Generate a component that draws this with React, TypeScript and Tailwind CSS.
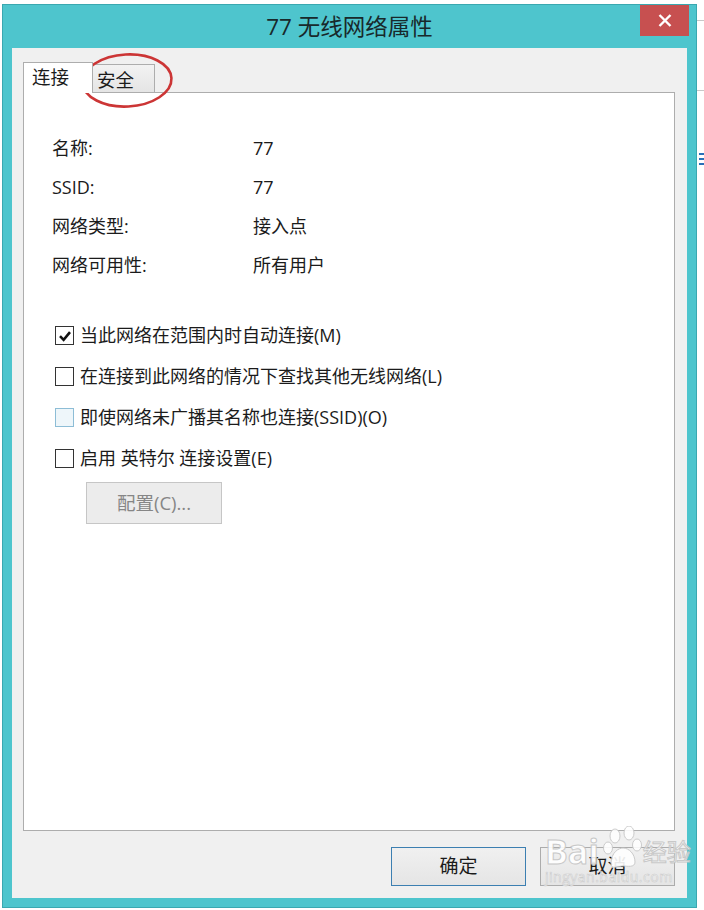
import clsx from "clsx";

const infoRows: [string, string][] = [
  ["名称:", "77"],
  ["SSID:", "77"],
  ["网络类型:", "接入点"],
  ["网络可用性:", "所有用户"],
];

const options = [
  { label: "当此网络在范围内时自动连接(M)", checked: true },
  { label: "在连接到此网络的情况下查找其他无线网络(L)" },
  { label: "即使网络未广播其名称也连接(SSID)(O)", hover: true },
  { label: "启用 英特尔 连接设置(E)" },
];

function CheckBox({ checked, hover }: { checked?: boolean; hover?: boolean }) {
  return (
    <span
      className={clsx(
        "flex h-[19px] w-[19px] shrink-0 items-center justify-center border",
        hover ? "border-[#8dbdd6] bg-[#eef6fa]" : "border-[#333333] bg-white"
      )}
    >
      {checked && (
        <svg width="14" height="14" viewBox="0 0 14 14">
          <path d="M2 7.2 L5.6 10.8 L12 3.2" fill="none" stroke="#111" strokeWidth="2.6" />
        </svg>
      )}
    </span>
  );
}

function Watermark() {
  return (
    <div className="pointer-events-none absolute left-[545px] top-[826px] flex flex-col opacity-90">
      <div className="flex items-end">
        <span className="text-[34px] font-bold leading-none text-white [-webkit-text-stroke:1px_#c4c4c4]">
          Bai
        </span>
        <svg width="58" height="44" viewBox="0 0 58 44" className="-mb-[2px]">
          <g fill="#ffffff" stroke="#c8c8c8" strokeWidth="1">
            <ellipse cx="16" cy="10" rx="5" ry="7" />
            <ellipse cx="30" cy="7" rx="5" ry="7" />
            <ellipse cx="9" cy="22" rx="4.5" ry="6" />
            <ellipse cx="38" cy="19" rx="4.5" ry="6" />
            <path d="M12 38 C12 26 20 22 24 22 C30 22 36 28 36 36 C36 42 28 40 24 40 C20 40 12 44 12 38 Z" />
          </g>
        </svg>
        <span className="-ml-[14px] mb-[4px] text-[24px] leading-none text-white [-webkit-text-stroke:1px_#c4c4c4]">
          经验
        </span>
      </div>
      <span className="mt-[2px] text-[14px] leading-none tracking-[0.5px] text-white [-webkit-text-stroke:0.6px_#c8c8c8]">
        jingyan.baidu.com
      </span>
    </div>
  );
}

export default function App() {
  return (
    <div className="relative flex h-[910px] w-[704px] flex-col overflow-hidden bg-white font-['Open_Sans','Noto_Sans_CJK_SC',sans-serif] text-[#1b1b1b]">
      <div className="h-[4px] shrink-0" />
      <div className="flex flex-1">
        <div className="w-[2px] shrink-0" />

        {/* window */}
        <div className="flex h-[904px] w-[695px] flex-col border border-[#3aa8b0] bg-[#4ec5cd]">
          <div className="flex h-[43px] shrink-0 items-start">
            <div className="w-[56px] shrink-0" />
            <div className="flex-1 pt-[7px] text-center text-[22.5px] leading-[30px] text-[#18292b]">
              77 无线网络属性
            </div>
            <div className="mr-[7px] flex h-[31px] w-[49px] items-center justify-center bg-[#c75050]">
              <svg width="14" height="13" viewBox="0 0 14 13">
                <path d="M1.5 1 L12.5 12 M12.5 1 L1.5 12" stroke="#fff" strokeWidth="2.4" />
              </svg>
            </div>
          </div>

          {/* client */}
          <div className="mx-[9px] flex h-[850px] flex-col bg-[#f0f0f0] pl-[11px] pr-[12px]">
            <div className="mt-[14px] flex h-[30px] items-end">
              <div className="relative z-10 -mb-px flex h-[31px] w-[70px] items-center border border-b-0 border-[#adadad] bg-white pl-[8px] pb-[2px] text-[18.5px]">
                连接
              </div>
              <div className="flex h-[28px] w-[62px] items-center border border-b-0 border-l-0 border-[#adadad] bg-gradient-to-b from-[#f2f2f2] to-[#e5e5e5] pl-[4px] pt-[2px] text-[18.5px]">
                安全
              </div>
            </div>

            <div className="flex h-[739px] flex-col border border-[#adadad] bg-white pl-[28px] pt-[36px]">
              {infoRows.map(([k, v]) => (
                <div key={k} className="flex h-[39px] items-center text-[18px]">
                  <span className="w-[201px]">{k}</span>
                  <span>{v}</span>
                </div>
              ))}

              <div className="mt-[30px] flex flex-col">
                {options.map((o) => (
                  <div key={o.label} className="ml-[3px] flex h-[41px] items-center gap-[6px] text-[18px]">
                    <CheckBox checked={o.checked} hover={o.hover} />
                    <span>{o.label}</span>
                  </div>
                ))}
              </div>

              <div className="ml-[34px] mt-[3px] flex h-[42px] w-[136px] items-center justify-center border border-[#c6c6c6] bg-[#ececec] text-[18.5px] text-[#868686]">
                配置(C)...
              </div>
            </div>

            <div className="mt-[16px] flex justify-end gap-[14px]">
              <div className="flex h-[39px] w-[135px] items-center justify-center border border-[#3c7fb1] bg-gradient-to-b from-[#f0f0f0] to-[#e5e5e5] text-[19px]">
                确定
              </div>
              <div className="flex h-[39px] w-[135px] items-center justify-center border border-[#acacac] bg-gradient-to-b from-[#f0f0f0] to-[#e5e5e5] text-[19px]">
                取消
              </div>
            </div>
          </div>
        </div>

        {/* page behind */}
        <div className="flex w-[7px] shrink-0 flex-col">
          <div className="mt-[16px] h-px bg-[#c8c8c8]" />
          <div className="mt-[69px] h-px bg-[#c8c8c8]" />
          <div className="ml-[2px] mt-[62px] flex flex-col gap-[3px]">
            <div className="h-[2px] bg-[#2a6fb8]" />
            <div className="h-[2px] bg-[#2a6fb8]" />
            <div className="h-[2px] bg-[#2a6fb8]" />
          </div>
        </div>
      </div>

      {/* red annotation */}
      <svg className="pointer-events-none absolute left-[80px] top-[52px]" width="98" height="58" viewBox="0 0 98 58">
        <ellipse cx="47" cy="28.5" rx="44.5" ry="26" fill="none" stroke="#cc3535" strokeWidth="2.6" transform="rotate(-3 47 28.5)" />
      </svg>

      <Watermark />
    </div>
  );
}
